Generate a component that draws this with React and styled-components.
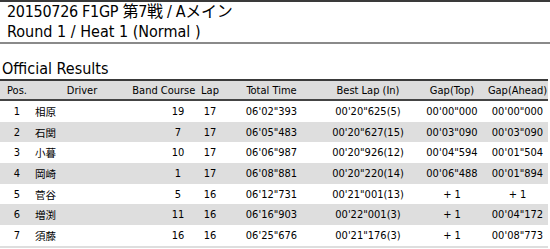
import React from "react";
import styled, { createGlobalStyle } from "styled-components";

const GlobalStyle = createGlobalStyle`
  body {
    margin: 0;
    background: #fff;
    color: #000;
    font-family: "DejaVu Sans Condensed", "DejaVu Sans", "Noto Sans CJK JP", sans-serif;
    font-stretch: semi-condensed;
  }
`;

const Heading = styled.div`
  border-top: 2px solid #3a3a3a;
  border-bottom: 2px solid #8a8a8a;
  padding: 0 7px;
`;

const HeadLine = styled.div`
  font-size: 16px;
  line-height: 20px;
  height: 20px;
  letter-spacing: ${p => p.$tight ? "-0.3px" : "0"};
`;

const SectionTitle = styled.div`
  font-size: 16px;
  line-height: 20px;
  margin-top: 15px;
  padding-left: 2px;
`;

const Table = styled.table`
  width: 548px;
  border-collapse: collapse;
  table-layout: fixed;
  font-size: 11px;
  border-top: 2px solid #3a3a3a;
  border-bottom: 2px solid #dedede;
`;

const Head = styled.th`
  background: #dddddd;
  font-weight: normal;
  height: 18px;
  padding: 0;
  text-align: center;
  border-bottom: 2px solid #444;
  white-space: nowrap;
`;

const Row = styled.tr`
  background: ${p => (p.$odd ? "#ffffff" : "#dedede")};
`;

const Cell = styled.td`
  height: 20.7px;
  padding: 0;
  text-align: ${p => p.$align || "center"};
  white-space: nowrap;
`;

const Name = styled(Cell)`
  font-family: "Noto Sans CJK JP", sans-serif;
  font-size: 10.5px;
  padding-left: 1px;
`;

const widths = [34, 96, 30, 36, 28, 95, 98, 70, 61];
const headers = ["Pos.", "Driver", "Band", "Course", "Lap", "Total Time", "Best Lap (In)", "Gap(Top)", "Gap(Ahead)"];

const results = [
  [1, "相原", "", 19, 17, "06'02\"393", "00'20\"625(5)", "00'00\"000", "00'00\"000"],
  [2, "石関", "", 7, 17, "06'05\"483", "00'20\"627(15)", "00'03\"090", "00'03\"090"],
  [3, "小暮", "", 10, 17, "06'06\"987", "00'20\"926(12)", "00'04\"594", "00'01\"504"],
  [4, "岡崎", "", 1, 17, "06'08\"881", "00'20\"220(14)", "00'06\"488", "00'01\"894"],
  [5, "菅谷", "", 5, 16, "06'12\"731", "00'21\"001(13)", "+ 1", "+ 1"],
  [6, "増渕", "", 11, 16, "06'16\"903", "00'22\"001(3)", "+ 1", "00'04\"172"],
  [7, "須藤", "", 16, 16, "06'25\"676", "00'21\"176(3)", "+ 1", "00'08\"773"],
];

export default function App() {
  return (
    <>
      <GlobalStyle />
      <Heading>
        <HeadLine $tight>20150726 F1GP 第7戦 / Aメイン</HeadLine>
        <HeadLine>Round 1 / Heat 1 (Normal )</HeadLine>
      </Heading>
      <SectionTitle>Official Results</SectionTitle>
      <Table>
        <colgroup>
          {widths.map((w, i) => <col key={i} style={{ width: w }} />)}
        </colgroup>
        <thead>
          <tr>
            {headers.map(h => <Head key={h}>{h}</Head>)}
          </tr>
        </thead>
        <tbody>
          {results.map((r, i) => (
            <Row key={r[0]} $odd={i % 2 === 0}>
              <Cell>{r[0]}</Cell>
              <Name $align="left">{r[1]}</Name>
              <Cell>{r[2]}</Cell>
              <Cell>{r[3]}</Cell>
              <Cell>{r[4]}</Cell>
              <Cell>{r[5]}</Cell>
              <Cell>{r[6]}</Cell>
              <Cell>{r[7]}</Cell>
              <Cell>{r[8]}</Cell>
            </Row>
          ))}
        </tbody>
      </Table>
    </>
  );
}
